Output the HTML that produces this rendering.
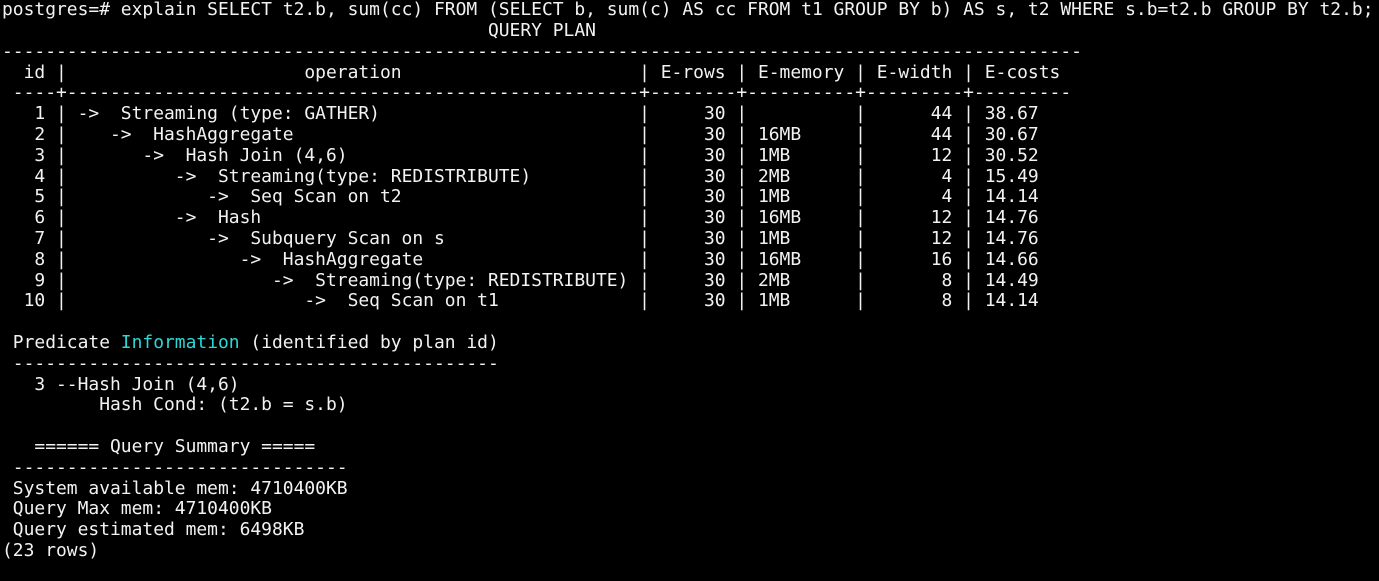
<!DOCTYPE html>
<html><head><meta charset="utf-8"><style>
html,body{margin:0;padding:0;background:#000;width:1379px;height:581px;overflow:hidden}
body{font-family:"DejaVu Sans Mono","Liberation Mono",monospace;font-size:17.95px;color:#f2f2f2;position:relative}
.l{position:absolute;left:2px;height:20.8px;line-height:20.8px;white-space:pre;width:1379px;margin-top:1.6px}
.l span{position:absolute;top:0}
.c{color:#2fd6d6}
</style></head><body>
<div class="l" style="top:-1.4px"><span style="left:0ch">postgres=# explain SELECT t2.b, sum(cc) FROM (SELECT b, sum(c) AS cc FROM t1 GROUP BY b) AS s, t2 WHERE s.b=t2.b GROUP BY t2.b;</span></div>
<div class="l" style="top:19.4px"><span style="left:45ch">QUERY PLAN</span></div>
<div class="l" style="top:40.2px"><span style="left:0ch">----------------------------------------------------------------------------------------------------</span></div>
<div class="l" style="top:61px"><span style="left:2ch">id</span><span style="left:5ch">|</span><span style="left:28ch">operation</span><span style="left:59ch">|</span><span style="left:61ch">E-rows</span><span style="left:68ch">|</span><span style="left:70ch">E-memory</span><span style="left:79ch">|</span><span style="left:81ch">E-width</span><span style="left:89ch">|</span><span style="left:91ch">E-costs</span></div>
<div class="l" style="top:81.8px"><span style="left:1ch">----+-----------------------------------------------------+--------+----------+---------+---------</span></div>

<div class="l" style="top:102.6px"><span style="left:3ch">1</span><span style="left:5ch">|</span><span style="left:7ch">-&gt;  Streaming (type: GATHER)</span><span style="left:59ch">|</span><span style="left:65ch">30</span><span style="left:68ch">|</span><span style="left:79ch">|</span><span style="left:86ch">44</span><span style="left:89ch">|</span><span style="left:91ch">38.67</span></div>
<div class="l" style="top:123.4px"><span style="left:3ch">2</span><span style="left:5ch">|</span><span style="left:10ch">-&gt;  HashAggregate</span><span style="left:59ch">|</span><span style="left:65ch">30</span><span style="left:68ch">|</span><span style="left:70ch">16MB</span><span style="left:79ch">|</span><span style="left:86ch">44</span><span style="left:89ch">|</span><span style="left:91ch">30.67</span></div>
<div class="l" style="top:144.2px"><span style="left:3ch">3</span><span style="left:5ch">|</span><span style="left:13ch">-&gt;  Hash Join (4,6)</span><span style="left:59ch">|</span><span style="left:65ch">30</span><span style="left:68ch">|</span><span style="left:70ch">1MB</span><span style="left:79ch">|</span><span style="left:86ch">12</span><span style="left:89ch">|</span><span style="left:91ch">30.52</span></div>
<div class="l" style="top:165px"><span style="left:3ch">4</span><span style="left:5ch">|</span><span style="left:16ch">-&gt;  Streaming(type: REDISTRIBUTE)</span><span style="left:59ch">|</span><span style="left:65ch">30</span><span style="left:68ch">|</span><span style="left:70ch">2MB</span><span style="left:79ch">|</span><span style="left:87ch">4</span><span style="left:89ch">|</span><span style="left:91ch">15.49</span></div>
<div class="l" style="top:185.8px"><span style="left:3ch">5</span><span style="left:5ch">|</span><span style="left:19ch">-&gt;  Seq Scan on t2</span><span style="left:59ch">|</span><span style="left:65ch">30</span><span style="left:68ch">|</span><span style="left:70ch">1MB</span><span style="left:79ch">|</span><span style="left:87ch">4</span><span style="left:89ch">|</span><span style="left:91ch">14.14</span></div>
<div class="l" style="top:206.6px"><span style="left:3ch">6</span><span style="left:5ch">|</span><span style="left:16ch">-&gt;  Hash</span><span style="left:59ch">|</span><span style="left:65ch">30</span><span style="left:68ch">|</span><span style="left:70ch">16MB</span><span style="left:79ch">|</span><span style="left:86ch">12</span><span style="left:89ch">|</span><span style="left:91ch">14.76</span></div>
<div class="l" style="top:227.4px"><span style="left:3ch">7</span><span style="left:5ch">|</span><span style="left:19ch">-&gt;  Subquery Scan on s</span><span style="left:59ch">|</span><span style="left:65ch">30</span><span style="left:68ch">|</span><span style="left:70ch">1MB</span><span style="left:79ch">|</span><span style="left:86ch">12</span><span style="left:89ch">|</span><span style="left:91ch">14.76</span></div>
<div class="l" style="top:248.2px"><span style="left:3ch">8</span><span style="left:5ch">|</span><span style="left:22ch">-&gt;  HashAggregate</span><span style="left:59ch">|</span><span style="left:65ch">30</span><span style="left:68ch">|</span><span style="left:70ch">16MB</span><span style="left:79ch">|</span><span style="left:86ch">16</span><span style="left:89ch">|</span><span style="left:91ch">14.66</span></div>
<div class="l" style="top:269px"><span style="left:3ch">9</span><span style="left:5ch">|</span><span style="left:25ch">-&gt;  Streaming(type: REDISTRIBUTE)</span><span style="left:59ch">|</span><span style="left:65ch">30</span><span style="left:68ch">|</span><span style="left:70ch">2MB</span><span style="left:79ch">|</span><span style="left:87ch">8</span><span style="left:89ch">|</span><span style="left:91ch">14.49</span></div>
<div class="l" style="top:289.8px"><span style="left:2ch">10</span><span style="left:5ch">|</span><span style="left:28ch">-&gt;  Seq Scan on t1</span><span style="left:59ch">|</span><span style="left:65ch">30</span><span style="left:68ch">|</span><span style="left:70ch">1MB</span><span style="left:79ch">|</span><span style="left:87ch">8</span><span style="left:89ch">|</span><span style="left:91ch">14.14</span></div>

<div class="l" style="top:331.4px"><span style="left:1ch">Predicate <span class="c" style="position:static">Information</span> (identified by plan id)</span></div>
<div class="l" style="top:352.2px"><span style="left:1ch">---------------------------------------------</span></div>
<div class="l" style="top:373px"><span style="left:3ch">3 --Hash Join (4,6)</span></div>
<div class="l" style="top:393.8px"><span style="left:9ch">Hash Cond: (t2.b = s.b)</span></div>
<div class="l" style="top:435.4px"><span style="left:3ch">====== Query Summary =====</span></div>
<div class="l" style="top:456.2px"><span style="left:1ch">-------------------------------</span></div>
<div class="l" style="top:477px"><span style="left:1ch">System available mem: 4710400KB</span></div>
<div class="l" style="top:497.8px"><span style="left:1ch">Query Max mem: 4710400KB</span></div>
<div class="l" style="top:518.6px"><span style="left:1ch">Query estimated mem: 6498KB</span></div>
<div class="l" style="top:539.4px"><span style="left:0ch">(23 rows)</span></div>
</body></html>
